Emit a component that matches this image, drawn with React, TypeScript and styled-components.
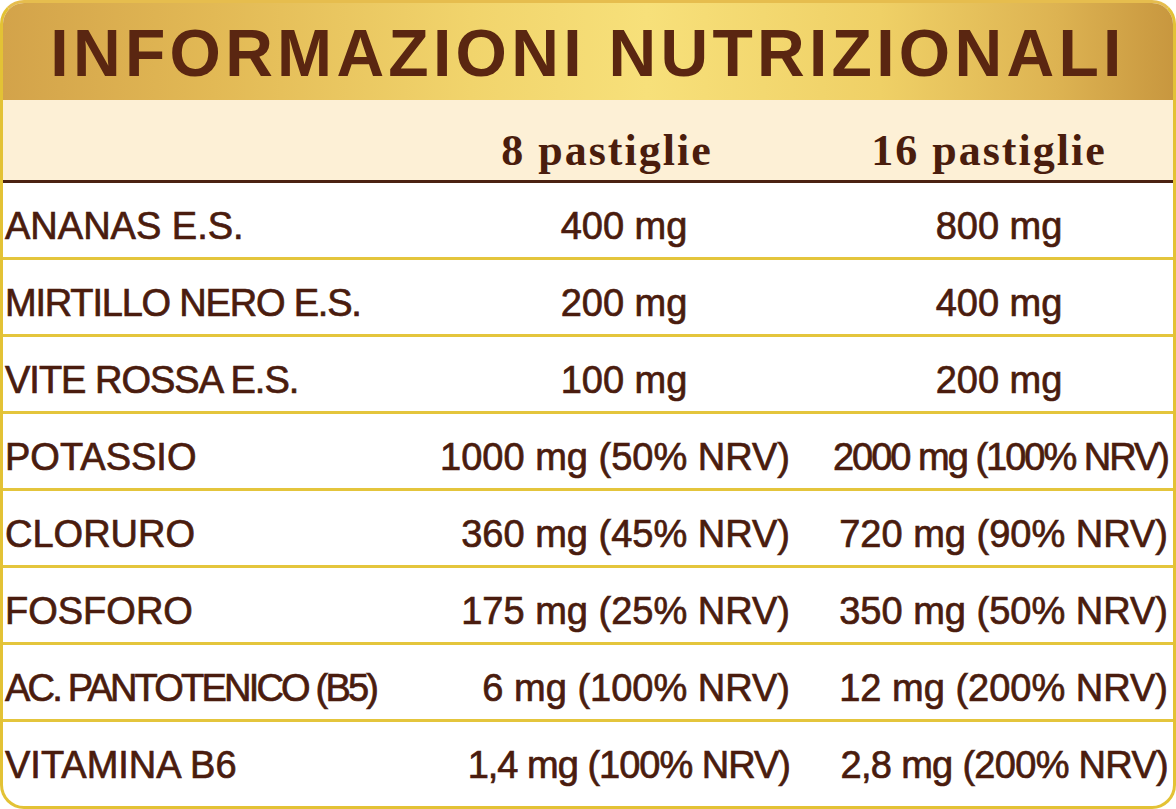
import React from "react";
import styled, { createGlobalStyle } from "styled-components";

const GlobalStyle = createGlobalStyle`
  html, body { margin: 0; padding: 0; background: #ffffff; }
  #root { width: 1176px; height: 809px; }
`;

const Card = styled.div`
  box-sizing: border-box;
  width: 1176px;
  height: 809px;
  border: 3px solid #e3c235;
  border-top-color: #e6bd4e;
  border-radius: 24px;
  overflow: hidden;
  background: #ffffff;
  display: flex;
  flex-direction: column;
`;

const TitleBar = styled.div`
  height: 97px;
  flex: none;
  display: flex;
  align-items: center;
  justify-content: center;
  background: linear-gradient(
    90deg,
    #d3a34a 0%,
    #e2b955 18%,
    #f1d46c 40%,
    #f7e07a 55%,
    #efd066 75%,
    #ddb352 90%,
    #c8973f 100%
  );
`;

const Title = styled.h1`
  margin: 0;
  font-family: "Liberation Sans", Arial, sans-serif;
  font-weight: 700;
  font-size: 66px;
  line-height: 66px;
  letter-spacing: 4.3px;
  color: #5a2611;
  white-space: nowrap;
  padding-top: 3px;
`;

const Grid = styled.div`
  display: grid;
  grid-template-columns: 413px 332px 338px;
  column-gap: 40px;
  padding: 0 5px 0 2px;
`;

const HeadRow = styled(Grid)`
  height: 80px;
  flex: none;
  background: #fdf0d6;
  border-bottom: 3px solid #4b2211;
  align-items: start;
`;

const HeadCell = styled.div<{ $shift: number }>`
  display: flex;
  justify-content: center;
  padding-right: ${(p) => p.$shift}px;
  padding-top: 30px;
  font-family: "Liberation Serif", "Times New Roman", serif;
  font-weight: 700;
  font-size: 44px;
  line-height: 42px;
  letter-spacing: 2px;
  color: #4a1d0d;
  white-space: nowrap;
`;

const Row = styled(Grid)<{ $last?: boolean }>`
  box-sizing: border-box;
  height: ${(p) => (p.$last ? "84px" : "77px")};
  flex: none;
  border-bottom: ${(p) => (p.$last ? "none" : "3px solid #e4c53c")};
  align-items: start;
`;

const cellText = `
  font-family: "Liberation Sans", Arial, sans-serif;
  font-size: 38px;
  line-height: 38px;
  color: #4a1c0e;
  -webkit-text-stroke: 0.7px #4a1c0e;
  white-space: nowrap;
  padding-top: 24px;
`;

const Label = styled.div<{ $track: number }>`
  ${cellText}
  letter-spacing: ${(p) => p.$track}px;
`;

const Value = styled.div<{ $align: "center" | "end"; $track: number }>`
  ${cellText}
  display: flex;
  justify-content: ${(p) => (p.$align === "center" ? "center" : "flex-end")};
  letter-spacing: ${(p) => p.$track}px;
`;

type Amount = { text: string; track?: number };
type Item = { name: string; nameTrack?: number; a: Amount; b: Amount };

const items: Item[] = [
  { name: "ANANAS E.S.", a: { text: "400 mg" }, b: { text: "800 mg" } },
  { name: "MIRTILLO NERO E.S.", nameTrack: -1.2, a: { text: "200 mg" }, b: { text: "400 mg" } },
  { name: "VITE ROSSA E.S.", nameTrack: -1, a: { text: "100 mg" }, b: { text: "200 mg" } },
  { name: "POTASSIO", a: { text: "1000 mg (50% NRV)" }, b: { text: "2000 mg (100% NRV)", track: -2 } },
  { name: "CLORURO", a: { text: "360 mg (45% NRV)" }, b: { text: "720 mg (90% NRV)" } },
  { name: "FOSFORO", a: { text: "175 mg (25% NRV)" }, b: { text: "350 mg (50% NRV)" } },
  { name: "AC. PANTOTENICO (B5)", nameTrack: -2.8, a: { text: "6 mg (100% NRV)" }, b: { text: "12 mg (200% NRV)" } },
  { name: "VITAMINA B6", a: { text: "1,4 mg (100% NRV)", track: -1 }, b: { text: "2,8 mg (200% NRV)", track: -0.7 } },
];

const isShort = (t: string) => !t.includes("NRV");

export default function App() {
  return (
    <>
      <GlobalStyle />
      <Card>
        <TitleBar>
          <Title>INFORMAZIONI NUTRIZIONALI</Title>
        </TitleBar>
        <HeadRow>
          <div />
          <HeadCell $shift={34}>8 pastiglie</HeadCell>
          <HeadCell $shift={20}>16 pastiglie</HeadCell>
        </HeadRow>
        {items.map((it, i) => (
          <Row key={it.name} $last={i === items.length - 1}>
            <Label $track={it.nameTrack ?? 0}>{it.name}</Label>
            <Value $align={isShort(it.a.text) ? "center" : "end"} $track={it.a.track ?? 0}>
              {it.a.text}
            </Value>
            <Value $align={isShort(it.b.text) ? "center" : "end"} $track={it.b.track ?? 0}>
              {it.b.text}
            </Value>
          </Row>
        ))}
      </Card>
    </>
  );
}
